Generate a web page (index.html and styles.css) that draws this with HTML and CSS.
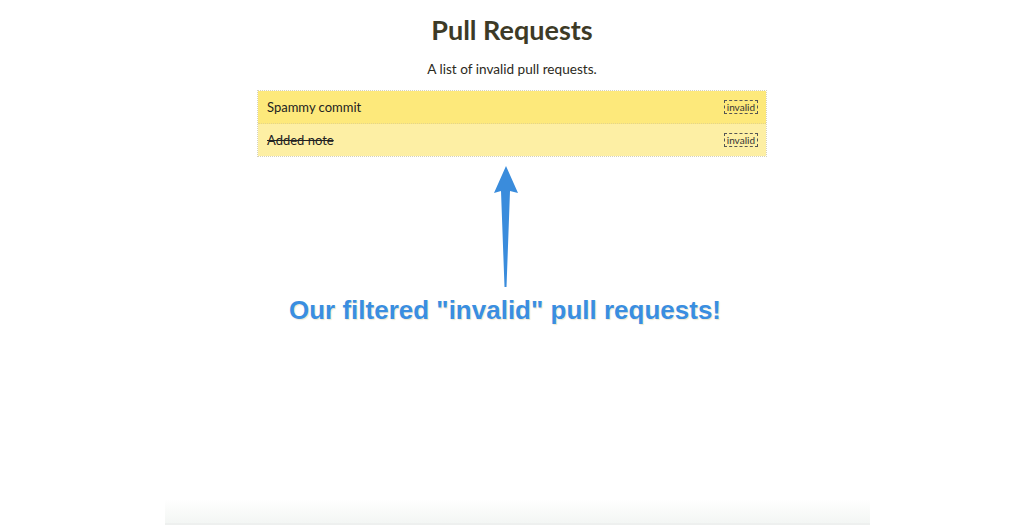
FILE: index.html
```html
<!DOCTYPE html>
<html>
<head>
<meta charset="utf-8">
<link rel="stylesheet" href="styles.css">
</head>
<body>
<div class="page">
  <main class="content">
    <h1 class="title">Pull Requests</h1>
    <p class="subtitle">A list of invalid pull requests.</p>
    <ul class="pr-list">
      <li class="pr pr-open"><span class="pr-name">Spammy commit</span><span class="badge">invalid</span></li>
      <li class="pr pr-closed"><span class="pr-name done">Added note</span><span class="badge">invalid</span></li>
    </ul>
    <div class="annotation">
      <svg class="arrow" width="30" height="124" viewBox="0 0 30 124">
        <path d="M15 0 L27 27 L19 25 L15.5 121 L13.5 121 L10 25 L3 27 Z" fill="#3a8cdc"/>
      </svg>
      <div class="caption">Our filtered "invalid" pull requests!</div>
    </div>
  </main>
  <div class="shade"></div>
</div>
</body>
</html>
```

FILE: styles.css
```css
html, body {
  margin: 0;
  padding: 0;
  background: #fff;
}
.page {
  height: 525px;
  display: flex;
  flex-direction: column;
  align-items: center;
  overflow: hidden;
}
.content {
  width: 510px;
  display: flex;
  flex-direction: column;
  align-items: stretch;
  flex: 1;
}
.title {
  margin: 14px 0 0;
  font-family: Lato, "Open Sans", sans-serif;
  font-weight: 700;
  font-size: 27px;
  line-height: 32px;
  color: #3d3a26;
  text-align: center;
}
.subtitle {
  margin: 14px 0 0;
  font-family: Lato, "Open Sans", sans-serif;
  font-size: 13.6px;
  line-height: 18px;
  color: #2c2a1c;
  text-align: center;
}
.pr-list {
  list-style: none;
  margin: 12px 0 0;
  padding: 0;
  border: 1px dotted #d6d2bc;
}
.pr {
  display: flex;
  align-items: center;
  justify-content: space-between;
  height: 32px;
  padding: 0 8px 0 9px;
  font-family: Lato, "Open Sans", sans-serif;
  font-size: 13px;
  color: #222;
}
.pr-open {
  background: #fde97b;
  border-bottom: 1px dotted #e4d48a;
}
.pr-closed {
  background: #fdefa4;
}
.done {
  text-decoration: line-through;
}
.badge {
  font-size: 10px;
  line-height: 12px;
  padding: 0 2px;
  border: 1px dashed #555;
  color: #333;
}
.annotation {
  display: flex;
  flex-direction: column;
  align-items: center;
  margin-top: 9px;
}
.arrow {
  display: block;
  margin-left: -12px;
}
.caption {
  margin-top: 5px;
  margin-right: 14px;
  font-family: "Liberation Sans", Arial, sans-serif;
  font-weight: 700;
  font-size: 26px;
  line-height: 30px;
  color: #3a8ee0;
  white-space: nowrap;
  text-shadow: 0 0 2px #fff, 1px 1px 1px #e8e2c8;
}
.shade {
  width: 705px;
  height: 24px;
  margin-left: 10px;
  background: linear-gradient(to bottom, rgba(244,246,245,0), #f3f6f4);
  border-bottom: 2px solid #eef0ef;
}
```
